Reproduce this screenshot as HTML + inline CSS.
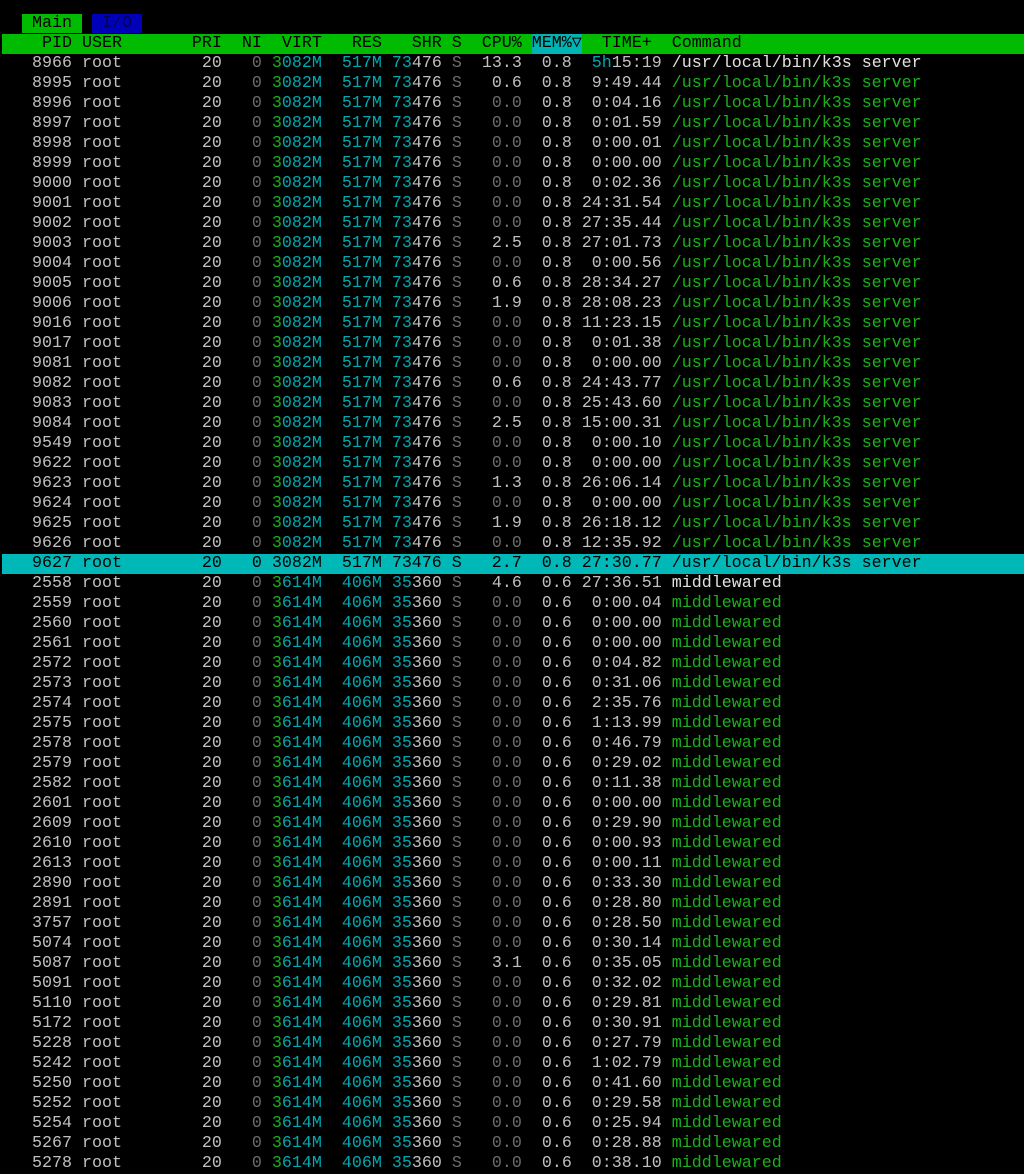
<!DOCTYPE html>
<html><head><meta charset="utf-8"><style>
html,body{margin:0;padding:0;background:#000;width:1024px;height:1172px;overflow:hidden}
#t{position:absolute;left:2px;top:14px;width:1022px;font-family:"Liberation Mono","DejaVu Sans Mono",monospace;font-size:16.67px;color:#c0c0c0}
#t div{height:20px;line-height:20px;white-space:pre;overflow:hidden}
b,i,u,em{font-weight:normal;font-style:normal;text-decoration:none}
b{color:#6c6c6c}
i{color:#1ab01a}
u{color:#00a8b0}
em{color:#1ab01a}
.w{color:#e0e0e0}
.hd{background:#00bb00;color:#000}
.m{background:#00b4b4;display:inline-block;width:50px;vertical-align:top}
.h{background:#00b8b8;color:#000}
.h b,.h i,.h u,.h em{color:#000}
.tm{background:#00bb00;color:#000}
.tio{background:#0000b8;color:#000050}
</style></head><body><div id="t">
<div>  <span class="tm"> Main </span> <span class="tio"> I/O </span></div>
<div class="hd">    PID USER       PRI  NI  VIRT   RES   SHR S  CPU% <span class="m">MEM%▽</span>  TIME+  Command</div>
<div>   8966 root        20   <b>0</b> <i>3</i><u>082M</u>  <u>517M</u> <u>73</u>476 <b>S</b>  13.3  0.8  <u>5h</u>15:19 <span class="w">/usr/local/bin/k3s server</span></div>
<div>   8995 root        20   <b>0</b> <i>3</i><u>082M</u>  <u>517M</u> <u>73</u>476 <b>S</b>   0.6  0.8  9:49.44 <em>/usr/local/bin/k3s server</em></div>
<div>   8996 root        20   <b>0</b> <i>3</i><u>082M</u>  <u>517M</u> <u>73</u>476 <b>S</b>   <b>0.0</b>  0.8  0:04.16 <em>/usr/local/bin/k3s server</em></div>
<div>   8997 root        20   <b>0</b> <i>3</i><u>082M</u>  <u>517M</u> <u>73</u>476 <b>S</b>   <b>0.0</b>  0.8  0:01.59 <em>/usr/local/bin/k3s server</em></div>
<div>   8998 root        20   <b>0</b> <i>3</i><u>082M</u>  <u>517M</u> <u>73</u>476 <b>S</b>   <b>0.0</b>  0.8  0:00.01 <em>/usr/local/bin/k3s server</em></div>
<div>   8999 root        20   <b>0</b> <i>3</i><u>082M</u>  <u>517M</u> <u>73</u>476 <b>S</b>   <b>0.0</b>  0.8  0:00.00 <em>/usr/local/bin/k3s server</em></div>
<div>   9000 root        20   <b>0</b> <i>3</i><u>082M</u>  <u>517M</u> <u>73</u>476 <b>S</b>   <b>0.0</b>  0.8  0:02.36 <em>/usr/local/bin/k3s server</em></div>
<div>   9001 root        20   <b>0</b> <i>3</i><u>082M</u>  <u>517M</u> <u>73</u>476 <b>S</b>   <b>0.0</b>  0.8 24:31.54 <em>/usr/local/bin/k3s server</em></div>
<div>   9002 root        20   <b>0</b> <i>3</i><u>082M</u>  <u>517M</u> <u>73</u>476 <b>S</b>   <b>0.0</b>  0.8 27:35.44 <em>/usr/local/bin/k3s server</em></div>
<div>   9003 root        20   <b>0</b> <i>3</i><u>082M</u>  <u>517M</u> <u>73</u>476 <b>S</b>   2.5  0.8 27:01.73 <em>/usr/local/bin/k3s server</em></div>
<div>   9004 root        20   <b>0</b> <i>3</i><u>082M</u>  <u>517M</u> <u>73</u>476 <b>S</b>   <b>0.0</b>  0.8  0:00.56 <em>/usr/local/bin/k3s server</em></div>
<div>   9005 root        20   <b>0</b> <i>3</i><u>082M</u>  <u>517M</u> <u>73</u>476 <b>S</b>   0.6  0.8 28:34.27 <em>/usr/local/bin/k3s server</em></div>
<div>   9006 root        20   <b>0</b> <i>3</i><u>082M</u>  <u>517M</u> <u>73</u>476 <b>S</b>   1.9  0.8 28:08.23 <em>/usr/local/bin/k3s server</em></div>
<div>   9016 root        20   <b>0</b> <i>3</i><u>082M</u>  <u>517M</u> <u>73</u>476 <b>S</b>   <b>0.0</b>  0.8 11:23.15 <em>/usr/local/bin/k3s server</em></div>
<div>   9017 root        20   <b>0</b> <i>3</i><u>082M</u>  <u>517M</u> <u>73</u>476 <b>S</b>   <b>0.0</b>  0.8  0:01.38 <em>/usr/local/bin/k3s server</em></div>
<div>   9081 root        20   <b>0</b> <i>3</i><u>082M</u>  <u>517M</u> <u>73</u>476 <b>S</b>   <b>0.0</b>  0.8  0:00.00 <em>/usr/local/bin/k3s server</em></div>
<div>   9082 root        20   <b>0</b> <i>3</i><u>082M</u>  <u>517M</u> <u>73</u>476 <b>S</b>   0.6  0.8 24:43.77 <em>/usr/local/bin/k3s server</em></div>
<div>   9083 root        20   <b>0</b> <i>3</i><u>082M</u>  <u>517M</u> <u>73</u>476 <b>S</b>   <b>0.0</b>  0.8 25:43.60 <em>/usr/local/bin/k3s server</em></div>
<div>   9084 root        20   <b>0</b> <i>3</i><u>082M</u>  <u>517M</u> <u>73</u>476 <b>S</b>   2.5  0.8 15:00.31 <em>/usr/local/bin/k3s server</em></div>
<div>   9549 root        20   <b>0</b> <i>3</i><u>082M</u>  <u>517M</u> <u>73</u>476 <b>S</b>   <b>0.0</b>  0.8  0:00.10 <em>/usr/local/bin/k3s server</em></div>
<div>   9622 root        20   <b>0</b> <i>3</i><u>082M</u>  <u>517M</u> <u>73</u>476 <b>S</b>   <b>0.0</b>  0.8  0:00.00 <em>/usr/local/bin/k3s server</em></div>
<div>   9623 root        20   <b>0</b> <i>3</i><u>082M</u>  <u>517M</u> <u>73</u>476 <b>S</b>   1.3  0.8 26:06.14 <em>/usr/local/bin/k3s server</em></div>
<div>   9624 root        20   <b>0</b> <i>3</i><u>082M</u>  <u>517M</u> <u>73</u>476 <b>S</b>   <b>0.0</b>  0.8  0:00.00 <em>/usr/local/bin/k3s server</em></div>
<div>   9625 root        20   <b>0</b> <i>3</i><u>082M</u>  <u>517M</u> <u>73</u>476 <b>S</b>   1.9  0.8 26:18.12 <em>/usr/local/bin/k3s server</em></div>
<div>   9626 root        20   <b>0</b> <i>3</i><u>082M</u>  <u>517M</u> <u>73</u>476 <b>S</b>   <b>0.0</b>  0.8 12:35.92 <em>/usr/local/bin/k3s server</em></div>
<div class="h">   9627 root        20   0 3082M  517M 73476 S   2.7  0.8 27:30.77 /usr/local/bin/k3s server</div>
<div>   2558 root        20   <b>0</b> <i>3</i><u>614M</u>  <u>406M</u> <u>35</u>360 <b>S</b>   4.6  0.6 27:36.51 <span class="w">middlewared</span></div>
<div>   2559 root        20   <b>0</b> <i>3</i><u>614M</u>  <u>406M</u> <u>35</u>360 <b>S</b>   <b>0.0</b>  0.6  0:00.04 <em>middlewared</em></div>
<div>   2560 root        20   <b>0</b> <i>3</i><u>614M</u>  <u>406M</u> <u>35</u>360 <b>S</b>   <b>0.0</b>  0.6  0:00.00 <em>middlewared</em></div>
<div>   2561 root        20   <b>0</b> <i>3</i><u>614M</u>  <u>406M</u> <u>35</u>360 <b>S</b>   <b>0.0</b>  0.6  0:00.00 <em>middlewared</em></div>
<div>   2572 root        20   <b>0</b> <i>3</i><u>614M</u>  <u>406M</u> <u>35</u>360 <b>S</b>   <b>0.0</b>  0.6  0:04.82 <em>middlewared</em></div>
<div>   2573 root        20   <b>0</b> <i>3</i><u>614M</u>  <u>406M</u> <u>35</u>360 <b>S</b>   <b>0.0</b>  0.6  0:31.06 <em>middlewared</em></div>
<div>   2574 root        20   <b>0</b> <i>3</i><u>614M</u>  <u>406M</u> <u>35</u>360 <b>S</b>   <b>0.0</b>  0.6  2:35.76 <em>middlewared</em></div>
<div>   2575 root        20   <b>0</b> <i>3</i><u>614M</u>  <u>406M</u> <u>35</u>360 <b>S</b>   <b>0.0</b>  0.6  1:13.99 <em>middlewared</em></div>
<div>   2578 root        20   <b>0</b> <i>3</i><u>614M</u>  <u>406M</u> <u>35</u>360 <b>S</b>   <b>0.0</b>  0.6  0:46.79 <em>middlewared</em></div>
<div>   2579 root        20   <b>0</b> <i>3</i><u>614M</u>  <u>406M</u> <u>35</u>360 <b>S</b>   <b>0.0</b>  0.6  0:29.02 <em>middlewared</em></div>
<div>   2582 root        20   <b>0</b> <i>3</i><u>614M</u>  <u>406M</u> <u>35</u>360 <b>S</b>   <b>0.0</b>  0.6  0:11.38 <em>middlewared</em></div>
<div>   2601 root        20   <b>0</b> <i>3</i><u>614M</u>  <u>406M</u> <u>35</u>360 <b>S</b>   <b>0.0</b>  0.6  0:00.00 <em>middlewared</em></div>
<div>   2609 root        20   <b>0</b> <i>3</i><u>614M</u>  <u>406M</u> <u>35</u>360 <b>S</b>   <b>0.0</b>  0.6  0:29.90 <em>middlewared</em></div>
<div>   2610 root        20   <b>0</b> <i>3</i><u>614M</u>  <u>406M</u> <u>35</u>360 <b>S</b>   <b>0.0</b>  0.6  0:00.93 <em>middlewared</em></div>
<div>   2613 root        20   <b>0</b> <i>3</i><u>614M</u>  <u>406M</u> <u>35</u>360 <b>S</b>   <b>0.0</b>  0.6  0:00.11 <em>middlewared</em></div>
<div>   2890 root        20   <b>0</b> <i>3</i><u>614M</u>  <u>406M</u> <u>35</u>360 <b>S</b>   <b>0.0</b>  0.6  0:33.30 <em>middlewared</em></div>
<div>   2891 root        20   <b>0</b> <i>3</i><u>614M</u>  <u>406M</u> <u>35</u>360 <b>S</b>   <b>0.0</b>  0.6  0:28.80 <em>middlewared</em></div>
<div>   3757 root        20   <b>0</b> <i>3</i><u>614M</u>  <u>406M</u> <u>35</u>360 <b>S</b>   <b>0.0</b>  0.6  0:28.50 <em>middlewared</em></div>
<div>   5074 root        20   <b>0</b> <i>3</i><u>614M</u>  <u>406M</u> <u>35</u>360 <b>S</b>   <b>0.0</b>  0.6  0:30.14 <em>middlewared</em></div>
<div>   5087 root        20   <b>0</b> <i>3</i><u>614M</u>  <u>406M</u> <u>35</u>360 <b>S</b>   3.1  0.6  0:35.05 <em>middlewared</em></div>
<div>   5091 root        20   <b>0</b> <i>3</i><u>614M</u>  <u>406M</u> <u>35</u>360 <b>S</b>   <b>0.0</b>  0.6  0:32.02 <em>middlewared</em></div>
<div>   5110 root        20   <b>0</b> <i>3</i><u>614M</u>  <u>406M</u> <u>35</u>360 <b>S</b>   <b>0.0</b>  0.6  0:29.81 <em>middlewared</em></div>
<div>   5172 root        20   <b>0</b> <i>3</i><u>614M</u>  <u>406M</u> <u>35</u>360 <b>S</b>   <b>0.0</b>  0.6  0:30.91 <em>middlewared</em></div>
<div>   5228 root        20   <b>0</b> <i>3</i><u>614M</u>  <u>406M</u> <u>35</u>360 <b>S</b>   <b>0.0</b>  0.6  0:27.79 <em>middlewared</em></div>
<div>   5242 root        20   <b>0</b> <i>3</i><u>614M</u>  <u>406M</u> <u>35</u>360 <b>S</b>   <b>0.0</b>  0.6  1:02.79 <em>middlewared</em></div>
<div>   5250 root        20   <b>0</b> <i>3</i><u>614M</u>  <u>406M</u> <u>35</u>360 <b>S</b>   <b>0.0</b>  0.6  0:41.60 <em>middlewared</em></div>
<div>   5252 root        20   <b>0</b> <i>3</i><u>614M</u>  <u>406M</u> <u>35</u>360 <b>S</b>   <b>0.0</b>  0.6  0:29.58 <em>middlewared</em></div>
<div>   5254 root        20   <b>0</b> <i>3</i><u>614M</u>  <u>406M</u> <u>35</u>360 <b>S</b>   <b>0.0</b>  0.6  0:25.94 <em>middlewared</em></div>
<div>   5267 root        20   <b>0</b> <i>3</i><u>614M</u>  <u>406M</u> <u>35</u>360 <b>S</b>   <b>0.0</b>  0.6  0:28.88 <em>middlewared</em></div>
<div>   5278 root        20   <b>0</b> <i>3</i><u>614M</u>  <u>406M</u> <u>35</u>360 <b>S</b>   <b>0.0</b>  0.6  0:38.10 <em>middlewared</em></div>
</div></body></html>
